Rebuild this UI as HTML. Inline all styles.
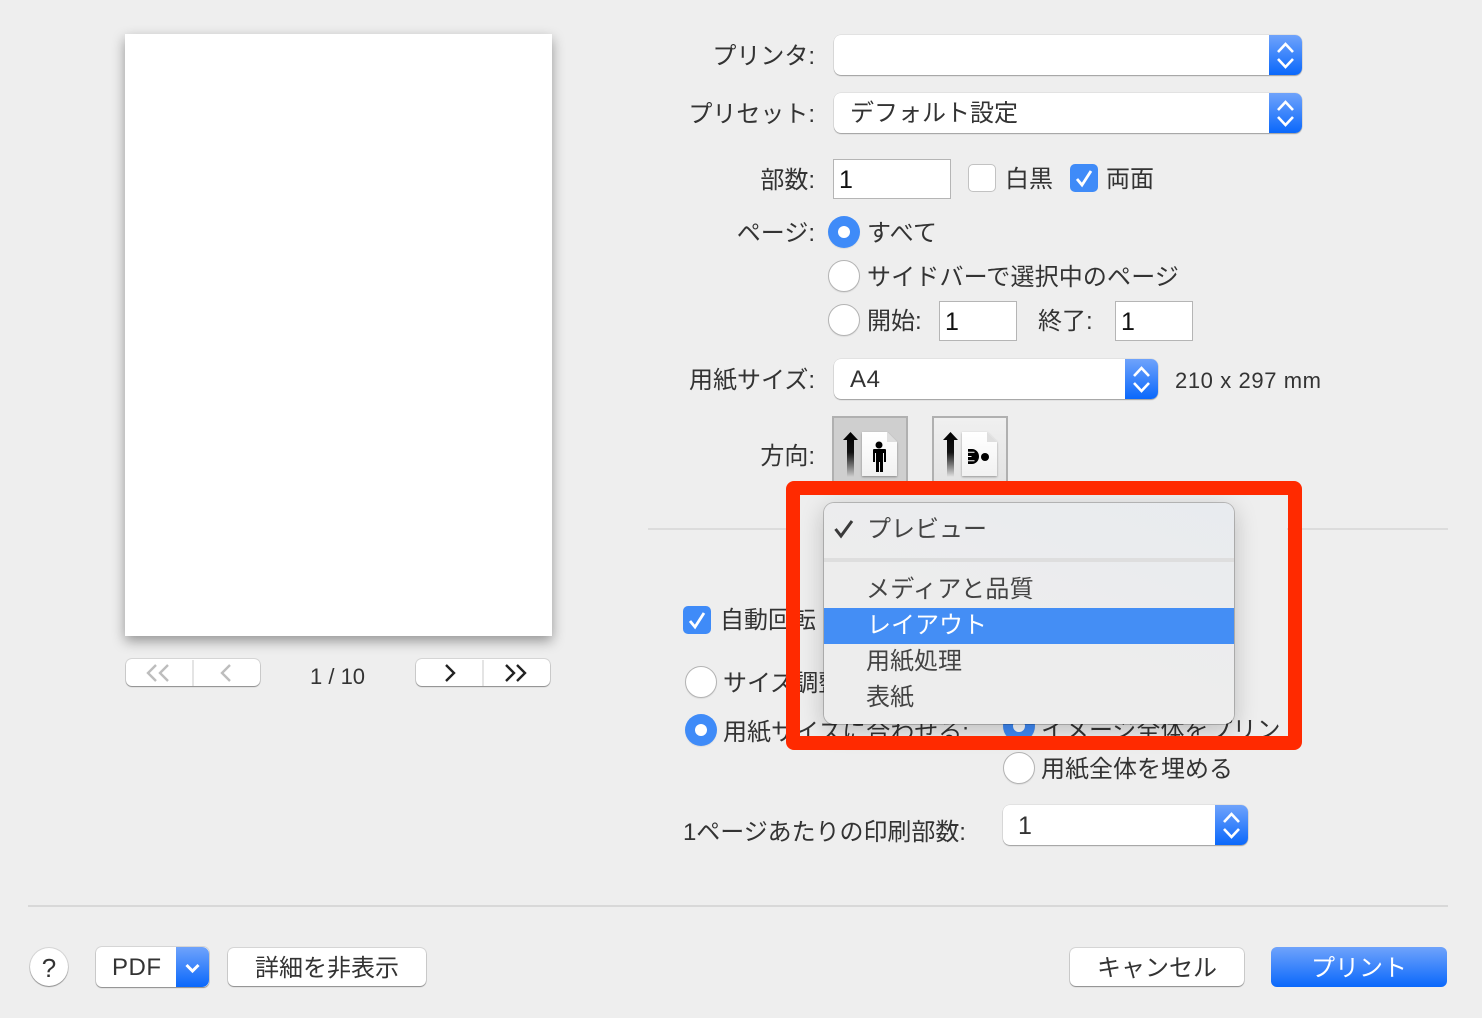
<!DOCTYPE html>
<html lang="ja"><head><meta charset="utf-8">
<style>
html,body{margin:0;padding:0}
body{width:1482px;height:1018px;background:#eeeeee;position:relative;overflow:hidden;font-family:"Liberation Sans","Noto Sans CJK JP",sans-serif;color:#333;font-size:24px;font-weight:400}
div,span,svg{position:absolute}
.t{line-height:40px;height:40px;white-space:nowrap;transform:translateY(2px)}
.r{text-align:right;width:200px}
.pop{background:#fff;border-radius:7px;box-shadow:0 1px 1px rgba(0,0,0,.3),0 0 0 .5px rgba(0,0,0,.1);height:40px}
.blue{position:absolute;right:0;top:0;bottom:0;background:linear-gradient(#6fa3fb,#0a68fb);border-radius:0 7px 7px 0}
.in{background:#fff;border:1px solid #b5b5b5;box-sizing:border-box;height:40px;line-height:40px;padding-left:5px;color:#111}
.rad{width:32px;height:32px;border-radius:50%;box-sizing:border-box;background:#fff;border:1px solid #b4b4b4;box-shadow:0 1px 1px rgba(0,0,0,.08)}
.rad.on{background:#3f8bf8;border:0}
.rad.on:after{content:"";position:absolute;left:10px;top:10px;width:12px;height:12px;border-radius:50%;background:#fff}
.chk{width:28px;height:28px;border-radius:5px;box-sizing:border-box;background:#fff;border:1px solid #c2c2c2}
.chk.on{background:#3f8bf8;border:0}
.btn{background:#fff;border-radius:6px;box-shadow:0 1px 1px rgba(0,0,0,.35),0 0 0 1px rgba(0,0,0,.1);height:40px;line-height:41px;text-align:center}
</style></head><body>

<!-- paper -->
<div style="left:125px;top:34px;width:427px;height:602px;background:#fff;box-shadow:0 5px 12px rgba(0,0,0,.38)"></div>

<!-- pager -->
<div class="btn" style="left:126px;top:659px;width:134px;height:27px"></div>
<div style="left:192px;top:660px;width:2px;height:26px;background:#e4e4e4"></div>
<svg style="left:126px;top:659px" width="134" height="28" fill="none" stroke="#bdbdbd" stroke-width="2.4"><path d="M30 6l-8 8 8 8M42 6l-8 8 8 8M104 6l-8 8 8 8"/></svg>
<div class="t" style="left:310px;top:655px;font-size:22px">1 / 10</div>
<div class="btn" style="left:416px;top:659px;width:134px;height:27px"></div>
<div style="left:482px;top:660px;width:2px;height:26px;background:#e4e4e4"></div>
<svg style="left:416px;top:659px" width="134" height="28" fill="none" stroke="#222" stroke-width="2.4"><path d="M30 6l8 8-8 8M90 6l8 8-8 8M101 6l8 8-8 8"/></svg>

<!-- labels -->
<div class="t r" style="left:615px;top:35px">プリンタ:</div>
<div class="t r" style="left:615px;top:93px">プリセット:</div>
<div class="t r" style="left:615px;top:159px">部数:</div>
<div class="t r" style="left:615px;top:212px">ページ:</div>
<div class="t r" style="left:615px;top:359px">用紙サイズ:</div>
<div class="t r" style="left:615px;top:435px">方向:</div>

<!-- printer popup -->
<div class="pop" style="left:834px;top:35px;width:468px"><div class="blue" style="width:33px"></div></div>
<svg style="left:1269px;top:35px" width="33" height="40" fill="none" stroke="#fff" stroke-width="2.6"><path d="M9 17l7.500-8 7.500 8M9 24l7.500 8 7.500-8"/></svg>
<div class="pop" style="left:834px;top:93px;width:468px"><div class="blue" style="width:33px"></div></div>
<svg style="left:1269px;top:93px" width="33" height="40" fill="none" stroke="#fff" stroke-width="2.6"><path d="M9 17l7.500-8 7.500 8M9 24l7.500 8 7.500-8"/></svg>
<div class="t" style="left:850px;top:92px">デフォルト設定</div>

<!-- copies -->
<div class="in" style="left:833px;top:159px;width:118px;font-size:25px">1</div>
<div class="chk" style="left:968px;top:164px"></div>
<div class="t" style="left:1005px;top:158px">白黒</div>
<div class="chk on" style="left:1070px;top:164px"></div>
<svg style="left:1070px;top:164px" width="28" height="28" fill="none" stroke="#fff" stroke-width="2.8"><path d="M7 15l5 6 9-14"/></svg>
<div class="t" style="left:1106px;top:158px">両面</div>

<!-- pages -->
<div class="rad on" style="left:828px;top:216px"></div>
<div class="t" style="left:867px;top:212px;letter-spacing:.3px">すべて</div>
<div class="rad" style="left:828px;top:260px"></div>
<div class="t" style="left:867px;top:256px;letter-spacing:.15px">サイドバーで選択中のページ</div>
<div class="rad" style="left:828px;top:304px"></div>
<div class="t" style="left:867px;top:300px">開始:</div>
<div class="in" style="left:939px;top:301px;width:78px;font-size:25px">1</div>
<div class="t" style="left:1038px;top:300px">終了:</div>
<div class="in" style="left:1115px;top:301px;width:78px;font-size:25px">1</div>

<!-- paper size -->
<div class="pop" style="left:834px;top:359px;width:324px"><div class="blue" style="width:33px"></div></div>
<svg style="left:1125px;top:359px" width="33" height="40" fill="none" stroke="#fff" stroke-width="2.6"><path d="M9 17l7.500-8 7.500 8M9 24l7.500 8 7.500-8"/></svg>
<div class="t" style="left:850px;top:358px;letter-spacing:.6px">A4</div>
<div class="t" style="left:1175px;top:359px;font-size:22px;letter-spacing:.6px">210 x 297 mm</div>

<!-- orientation -->
<div style="left:832px;top:416px;width:76px;height:70px;box-sizing:border-box;background:#cfcfcf;border:2px solid #b0b0b0;border-bottom:0"></div>
<div style="left:932px;top:416px;width:76px;height:70px;box-sizing:border-box;background:linear-gradient(#f0f0f0,#e2e2e2);border:2px solid #b0b0b0;border-bottom:0"></div>
<svg style="left:832px;top:416px" width="180" height="66">
<defs><linearGradient id="g" x1="0" y1="0" x2="0" y2="1"><stop offset="0" stop-color="#000"/><stop offset=".45" stop-color="#111"/><stop offset="1" stop-color="#000" stop-opacity="0"/></linearGradient>
<linearGradient id="p" x1="0" y1="0" x2="0" y2="1"><stop offset="0" stop-color="#fff"/><stop offset="1" stop-color="#f1f1f1"/></linearGradient>
<filter id="s" x="-20%" y="-20%" width="140%" height="140%"><feDropShadow dx="0" dy="1" stdDeviation="1" flood-color="#000" flood-opacity=".35"/></filter></defs>
<path d="M111 24l7.500-8 7.500 8h-4v37h-7V24z" fill="url(#g)"/>
<path d="M11 24l7.500-8 7.500 8h-4v37h-7V24z" fill="url(#g)"/>
<path d="M30 16H55l10 10v34H30z" fill="url(#p)" filter="url(#s)"/>
<path d="M55 16l10 10H55z" fill="#dedede"/>
<circle cx="47" cy="29" r="3.500" fill="#000"/>
<path d="M41 33h12q1 0 1 1v12h-2v-9h-1v19h-3V46h-1v10h-3V37h-1v9h-2V34q0-1 1-1z" fill="#000"/>
<path d="M130 16H155l10 10v34h-35z" fill="url(#p)" filter="url(#s)"/>
<path d="M155 16l10 10h-10z" fill="#dedede"/>
<circle cx="153" cy="41" r="4" fill="#000"/>
<path d="M136 33h4c4 0 7 3.500 7 7.500s-3 7.500-7 7.500h-4z" fill="#000"/>
<path d="M136 36.200h6.500M136 44.800h6.500M136 40.500h3.500" stroke="#fff" stroke-width="1" fill="none"/>
</svg>

<!-- separators -->
<div style="left:648px;top:528px;width:800px;height:2px;background:#dcdcdc"></div>
<div style="left:28px;top:905px;width:1420px;height:2px;background:#d8d8d8"></div>

<!-- layout section -->
<div class="chk on" style="left:683px;top:606px"></div>
<svg style="left:683px;top:606px" width="28" height="28" fill="none" stroke="#fff" stroke-width="2.8"><path d="M7 15l5 6 9-14"/></svg>
<div class="t" style="left:720px;top:599px;font-size:24px">自動回転</div>
<div class="rad" style="left:685px;top:666px"></div>
<div class="t" style="left:723px;top:662px">サイズ調整:</div>
<div class="rad on" style="left:685px;top:714px"></div>
<div class="t" style="left:723px;top:711px">用紙サイズに合わせる:</div>
<div class="rad" style="left:1003px;top:752px"></div>
<div class="t" style="left:1041px;top:748px">用紙全体を埋める</div>
<div class="t" style="left:683px;top:811px;letter-spacing:-.05px">1ページあたりの印刷部数:</div>
<div class="pop" style="left:1003px;top:805px;width:245px"><div class="blue" style="width:33px"></div></div>
<svg style="left:1215px;top:805px" width="33" height="40" fill="none" stroke="#fff" stroke-width="2.6"><path d="M9 17l7.500-8 7.500 8M9 24l7.500 8 7.500-8"/></svg>
<div class="t" style="left:1018px;top:804px;font-size:25px">1</div>

<!-- hidden popup behind the menu -->
<div style="left:1200px;top:509px;width:47px;height:40px;border-radius:0 7px 7px 0;background:linear-gradient(#3f7fe6,#0a58d8)"></div>
<svg style="left:1215px;top:509px" width="32" height="40" fill="none" stroke="#cfe0fa" stroke-width="2.600"><path d="M9 17l7.500-8 7.500 8M9 24l7.500 8 7.500-8"/></svg>

<!-- area inside the red frame -->
<div style="left:799px;top:495px;width:488px;height:241px;background:#eeeeee"></div>
<div class="rad on" style="left:1003px;top:710px"></div>
<div style="left:1041px;top:709px;height:27px;width:246px;overflow:hidden"><span style="left:0;top:2px;line-height:40px;white-space:nowrap">イメージ全体をプリント</span></div>
<div style="left:799px;top:711px;height:25px;width:200px;overflow:hidden"><span style="left:-76px;top:2px;line-height:40px;white-space:nowrap">用紙サイズに合わせる:</span></div>
<div style="left:799px;top:600px;width:25px;height:44px;overflow:hidden"><span style="left:-79px;top:1px;line-height:40px;white-space:nowrap">自動回転</span></div>
<div style="left:799px;top:662px;width:25px;height:44px;overflow:hidden"><span style="left:-76px;top:2px;line-height:40px;white-space:nowrap">サイズ調整:</span></div>

<!-- menu -->
<div style="left:824px;top:503px;width:410px;height:221px;border-radius:10px;background:linear-gradient(200deg,#e8ebef 0%,#ededed 55%);box-shadow:0 0 0 1px rgba(0,0,0,.2),0 6px 24px rgba(0,0,0,.22);overflow:hidden">
  <div style="left:0;top:55px;width:410px;height:4px;background:#dedede"></div>
  <div style="left:0;top:105px;width:410px;height:36px;background:#448ef5"></div>
</div>
<svg style="left:834px;top:519px" width="22" height="20" fill="none" stroke="#3a3a3a" stroke-width="3"><path d="M1.500 10l5.500 7L18 2"/></svg>
<div class="t" style="left:867px;top:508px;color:#444">プレビュー</div>
<div class="t" style="left:866px;top:568px;color:#444;letter-spacing:.3px">メディアと品質</div>
<div class="t" style="left:867px;top:604px;color:#fff">レイアウト</div>
<div class="t" style="left:866px;top:640px;color:#444">用紙処理</div>
<div class="t" style="left:866px;top:676px;color:#444">表紙</div>

<!-- red frame -->
<div style="left:786px;top:481px;width:516px;height:269px;box-sizing:border-box;border:14px solid #ff2a00;border-radius:8px"></div>

<!-- bottom -->
<div style="left:30px;top:948px;width:38px;height:38px;border-radius:50%;background:#fff;box-shadow:0 1px 1px rgba(0,0,0,.35),0 0 0 1px rgba(0,0,0,.1);text-align:center;line-height:40px;font-size:26px">?</div>

<div class="btn" style="left:96px;top:947px;width:113px;text-align:left;letter-spacing:.5px"><span style="left:16px;top:0">PDF</span><div class="blue" style="width:33px"></div></div>
<svg style="left:176px;top:947px" width="33" height="40" fill="none" stroke="#fff" stroke-width="3"><path d="M10.500 18l6 6 6-6"/></svg>
<div class="btn" style="left:228px;top:948px;width:198px;height:38px;line-height:41px">詳細を非表示</div>
<div class="btn" style="left:1070px;top:948px;width:174px;height:38px;line-height:41px">キャンセル</div>
<div class="btn" style="left:1271px;top:947px;width:176px;color:#fff;background:linear-gradient(#6fa3fb,#0a68fb);box-shadow:none;line-height:43px">プリント</div>

</body></html>
